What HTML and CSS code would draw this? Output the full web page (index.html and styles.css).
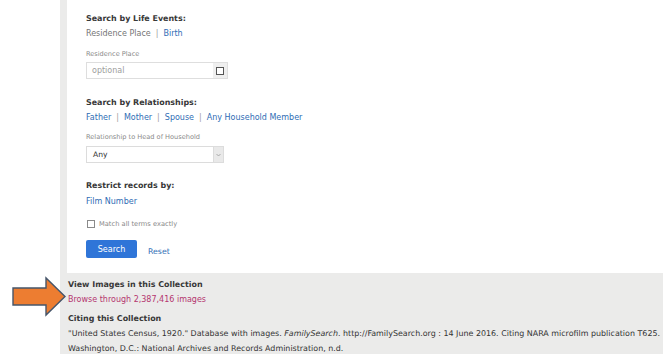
FILE: index.html
```html
<!DOCTYPE html>
<html>
<head>
<meta charset="utf-8">
<link rel="stylesheet" href="styles.css">
</head>
<body>
<div class="arrow">
  <svg width="60" height="44" viewBox="0 0 60 44">
    <polygon points="3,13 36,13 36,3 55,21.5 36,40 36,30 3,30" fill="#ed7d31" stroke="#46556a" stroke-width="1.4" stroke-linejoin="miter"/>
  </svg>
</div>
<div class="panel">
  <div class="card">
    <div class="heading">Search by Life Events:</div>
    <div class="tabs t1"><span class="muted">Residence Place</span><span class="sep">|</span><a class="link">Birth</a></div>
    <div class="label l1">Residence Place</div>
    <div class="field">
      <span class="ph">optional</span>
      <span class="chk-wrap"><span class="chk"></span></span>
    </div>
    <div class="heading h2">Search by Relationships:</div>
    <div class="tabs t1"><a class="link">Father</a><span class="sep">|</span><a class="link">Mother</a><span class="sep">|</span><a class="link">Spouse</a><span class="sep">|</span><a class="link">Any Household Member</a></div>
    <div class="label l2">Relationship to Head of Household</div>
    <div class="select">
      <span class="val">Any</span>
      <span class="sel-btn"><svg width="5" height="4" viewBox="0 0 5 4"><path d="M0.5 1 L2.5 3 L4.5 1" fill="none" stroke="#999" stroke-width="0.8"/></svg></span>
    </div>
    <div class="heading h3">Restrict records by:</div>
    <div class="tabs t2"><a class="link">Film Number</a></div>
    <div class="match"><span class="box"></span><span>Match all terms exactly</span></div>
    <div class="actions">
      <span class="btn">Search</span>
      <a class="link reset">Reset</a>
    </div>
  </div>
  <div class="info">
    <div class="iheading">View Images in this Collection</div>
    <div class="browse">Browse through 2,387,416 images</div>
    <div class="iheading ih2">Citing this Collection</div>
    <p class="cite">"United States Census, 1920." Database with images. <i>FamilySearch</i>. http://FamilySearch.org : 14 June 2016. Citing NARA microfilm publication T625.<br>Washington, D.C.: National Archives and Records Administration, n.d.</p>
  </div>
</div>
</body>
</html>
```
FILE: styles.css
```css
html, body {
  margin: 0;
  padding: 0;
  background: #ffffff;
}
body {
  font-family: "DejaVu Sans", Verdana, sans-serif;
  color: #333;
  position: relative;
  height: 356px;
  overflow: hidden;
}
.arrow {
  position: absolute;
  left: 10px;
  top: 275px;
}
.arrow svg { display: block; }
.panel {
  margin-left: 60px;
  background: #ebebea;
  padding-left: 7px;
  height: 354px;
  overflow: hidden;
}
.card {
  background: #fff;
  padding: 13px 0 15px 19px;
  display: flex;
  flex-direction: column;
  align-items: flex-start;
}
.heading, .iheading {
  font-weight: bold;
  font-size: 7.95px;
  line-height: 12px;
  height: 12px;
  color: #383838;
  white-space: nowrap;
}
.h2 { margin-top: 18px; }
.h3 { margin-top: 17px; }
.tabs {
  font-size: 8px;
  line-height: 12px;
  height: 12px;
  white-space: nowrap;
  display: flex;
  align-items: center;
}
.t1 { margin-top: 3px; }
.t2 { margin-top: 4px; }
.muted { color: #757575; }
.link { color: #2f6db5; }
.sep {
  color: #a0a0a0;
  margin: 0 5px;
}
.label {
  font-size: 6.6px;
  line-height: 10px;
  height: 10px;
  color: #8a8a8a;
  white-space: nowrap;
}
.l1 { margin-top: 9px; }
.l2 { margin-top: 8px; }
.field {
  margin-top: 3px;
  width: 140px;
  height: 15px;
  border: 1px solid #dedede;
  display: flex;
  align-items: center;
  justify-content: space-between;
}
.ph {
  font-size: 8px;
  color: #9d9d9d;
  padding-left: 5px;
}
.chk-wrap {
  width: 14px;
  height: 15px;
  background: #efefef;
  display: flex;
  align-items: center;
  justify-content: center;
}
.chk {
  width: 6px;
  height: 6px;
  border: 1px solid #555;
  background: #fff;
}
.select {
  margin-top: 4px;
  width: 136px;
  height: 15px;
  border: 1px solid #dcdcdc;
  display: flex;
  align-items: center;
  justify-content: space-between;
}
.val {
  font-size: 7.6px;
  color: #333;
  padding-left: 6px;
}
.sel-btn {
  width: 9px;
  height: 15px;
  background: #e9e9e9;
  border-left: 1px solid #dcdcdc;
  display: flex;
  align-items: center;
  justify-content: center;
}
.match {
  margin-top: 11px;
  height: 10px;
  display: flex;
  align-items: center;
  font-size: 6.7px;
  color: #888;
  white-space: nowrap;
}
.box {
  width: 6px;
  height: 6px;
  border: 1px solid #8a8a8a;
  margin-left: 1px;
  margin-right: 4px;
}
.actions {
  margin-top: 11px;
  display: flex;
  align-items: center;
}
.btn {
  width: 51px;
  height: 18px;
  background: #2f75d8;
  color: #fff;
  font-size: 8px;
  border-radius: 2px;
  display: flex;
  align-items: center;
  justify-content: center;
}
.reset {
  font-size: 7.8px;
  margin-left: 11px;
  margin-top: 4px;
}
.info {
  padding: 6px 0 0 1px;
}
.browse {
  margin-top: 3px;
  font-size: 8px;
  line-height: 12px;
  height: 12px;
  color: #b5366f;
  white-space: nowrap;
}
.ih2 { margin-top: 7px; }
.cite {
  margin: 1px 0 0;
  font-size: 7.95px;
  line-height: 15px;
  color: #333;
  white-space: nowrap;
}
```
